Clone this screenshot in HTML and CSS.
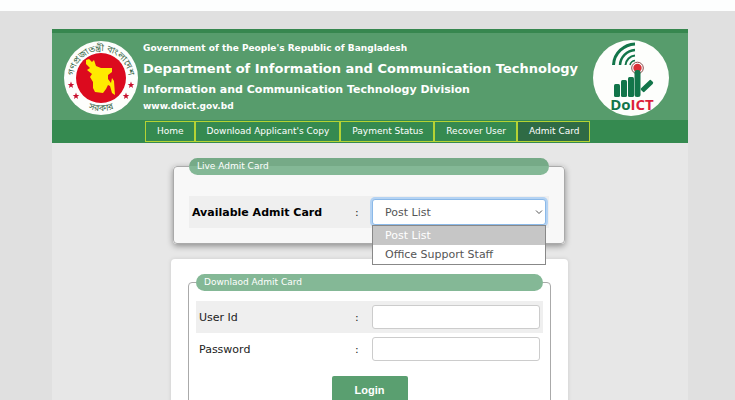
FILE: index.html
```
<!DOCTYPE html>
<html lang="en">

    <head>
        <meta charset="utf-8">
        <title>Admit Card</title>
        <link rel="stylesheet" href="styles.css">
    </head>

    <body>
        <div class="wrapper">

            <header class="header">
                <svg class="logo" viewBox="0 0 74 74" role="img" aria-label="Government seal">
                    <defs>
                        <path id="topArc" d="M10.500 45 A27.500 27.500 0 1 1 63.500 45"/>
                        <path id="bottomArc" d="M10 56 A33 33 0 0 0 64 56"/>
                        <path id="star" d="M0 -3.4 L0.9 -1.1 L3.3 -1 L1.4 0.6 L2 2.9 L0 1.6 L-2 2.9 L-1.4 0.6 L-3.3 -1 L-0.9 -1.1 Z"/>
                    </defs>
                    <circle cx="37" cy="37" r="37" fill="#fdfefc"/>
                    <circle cx="37" cy="37" r="25" fill="#dc0a1e"/>
                    <path d="M22 19 L25 18 L28 21 L30 19 L32 25 L37 27 L48 27 L48 31 L44 34 L44 38 L47 42 L48 37 L50 40 L51 54 L48 52 L46 45 L44 44 L42 48 L39 52 L31 51 L29 47 L29 41 L26 36 L28 33 L23 29 L26 27 L22 23 Z" fill="#ffea00"/>
                    <g fill="#c8102e">
                        <use href="#star" x="7" y="44"/>
                        <use href="#star" x="12" y="55"/>
                        <use href="#star" x="67" y="44"/>
                        <use href="#star" x="62" y="55"/>
                    </g>
                    <text class="seal-text"><textPath href="#topArc" startOffset="50%">গণপ্রজাতন্ত্রী বাংলাদেশ</textPath></text>
                    <text class="seal-text"><textPath href="#bottomArc" startOffset="50%">সরকার</textPath></text>
                </svg>

                <div class="titles">
                    <p class="small-title">Government of the People's Republic of Bangladesh</p>
                    <h1>Department of Information and Communication Technology</h1>
                    <h2>Information and Communication Technology Division</h2>
                    <p class="site">www.doict.gov.bd</p>
                </div>

                <svg class="logo logo-right" viewBox="0 0 76 76" role="img" aria-label="DoICT">
                    <circle cx="38" cy="38" r="38" fill="#fdfefc"/>
                    <g fill="none" stroke="#12754a">
                        <path d="M20.500 25 C21 13 31 4.500 42 4" stroke-width="3"/>
                        <path d="M27 25 C27.500 17 34 10.500 42 10" stroke-width="2.500"/>
                        <path d="M32.500 25 C33 20 37 16 42 15.500" stroke-width="2"/>
                        <path d="M37 25 C37.500 22.500 39 21 42 20.500" stroke-width="1.500"/>
                    </g>
                    <circle cx="44.500" cy="28" r="5.800" fill="#fff" stroke="#8b4d4d" stroke-width="1"/>
                    <circle cx="44.500" cy="28" r="4.200" fill="#db2f36"/>
                    <g fill="#12754a">
                        <rect x="21" y="44" width="6" height="13" rx="1.500"/>
                        <rect x="28" y="40" width="6" height="17" rx="1.500"/>
                        <rect x="35" y="37" width="6" height="20" rx="1.500"/>
                        <rect x="41.500" y="30" width="6" height="27" rx="2.500"/>
                        <rect x="47" y="43.500" width="14" height="5" rx="1.500" transform="rotate(-44 54 46)"/>
                    </g>
                    <text class="brand" x="39" y="70" text-anchor="middle" fill="#12754a">Do<tspan fill="#db1f3a">ICT</tspan></text>
                </svg>
            </header>

            <!-- Menu -->
            <nav class="menu">
                <a href="#">Home</a>
                <a href="#">Download Applicant's Copy</a>
                <a href="#">Payment Status</a>
                <a href="#">Recover User</a>
                <a class="active" href="#">Admit Card</a>
            </nav>

            <main class="content">
                <fieldset class="live">
                    <legend>Live Admit Card</legend>
                    <div class="row row-live">
                        <label for="post_list">Available Admit Card</label>
                        <span class="colon">:</span>
                        <div class="select-box">
                            <select id="post_list">
                                <option>Post List</option>
                                <option>Office Support Staff</option>
                            </select>
                            <svg class="arrow" viewBox="0 0 8 6" aria-hidden="true"><path d="M1 1.500 L4 4.500 L7 1.500" fill="none" stroke="#555" stroke-width="1"/></svg>
                            <ul class="options">
                                <li class="selected">Post List</li>
                                <li>Office Support Staff</li>
                            </ul>
                        </div>
                    </div>
                </fieldset>

                <form class="card">
                    <fieldset class="download">
                        <legend>Downlaod Admit Card</legend>
                        <div class="row shaded">
                            <label for="user_id">User Id</label>
                            <span class="colon">:</span>
                            <input type="text" id="user_id">
                        </div>
                        <div class="row">
                            <label for="password">Password</label>
                            <span class="colon">:</span>
                            <input type="password" id="password">
                        </div>
                        <button type="button" class="login">Login</button>
                    </fieldset>
                </form>
            </main>

        </div>
    </body>

</html>
```
FILE: styles.css
```
* {
    box-sizing: border-box;
}
html {
    min-height: 100%;
    background-color: #e0e0e0;
    scrollbar-width: none;
}
body {
    margin: 0;
    padding: 18px 47px 0 52px;
    border-top: 11px solid #fdfefe;
    font-family: Verdana, "DejaVu Sans", sans-serif;
    font-size: 11px;
    color: #222;
}
.wrapper {
    padding-bottom: 20px;
    background-color: #e7e7e7;
}
.header {
    display: flex;
    align-items: flex-start;
    padding: 7px 19px 4px 12px;
    border-top: 4px solid #37874f;
    background-color: #579c6c;
    color: white;
}
.logo {
    flex: none;
    width: 74px;
    height: 76px;
}
.logo-right {
    width: 76px;
}
.seal-text {
    font-family: "Noto Sans Bengali", "Noto Sans", sans-serif;
    font-size: 9px;
    fill: #3f6b4e;
    text-anchor: middle;
}
.brand {
    font-family: "Open Sans", sans-serif;
    font-size: 15px;
    font-weight: bold;
}
.titles {
    flex: 1;
    padding-left: 5px;
    font-weight: bold;
    white-space: nowrap;
}
.titles p, .titles h1, .titles h2 {
    margin: 0;
}
.titles .small-title {
    font-size: 9px;
    line-height: 16px;
}
.titles h1 {
    font-size: 13px;
    line-height: 26px;
}
.titles h2 {
    font-size: 11px;
    line-height: 16px;
}
.titles .site {
    font-size: 9px;
    line-height: 16px;
}
.menu {
    display: flex;
    padding: 1px 0 1px 93px;
    background-color: #358a50;
}
.menu a {
    padding: 0 10px 0 11px;
    border: 1px solid #b5d334;
    color: white;
    font-size: 9px;
    line-height: 19px;
    text-decoration: none;
    white-space: nowrap;
}
.menu .active {
    background-color: #2f6b45;
}
.content {
    padding: 15px 120px 0 119px;
}
fieldset {
    margin: 0;
    min-width: 0;
    border: 1px solid #aaa;
    border-radius: 4px;
}
legend {
    width: 100%;
    padding: 0 8px;
    border-radius: 9px;
    background-color: #84b896;
    color: white;
    font-size: 9px;
    line-height: 17px;
}
.live {
    margin: 0 3px 0 2px;
    padding: 21px 15px 15px;
    background-color: #f8f8f8;
    box-shadow: 0 2px 6px rgba(0, 0, 0, 0.4);
}
.live legend {
    background-image: linear-gradient(#76aa87 50%, #84b896 50%);
}
.row {
    display: flex;
    align-items: center;
    height: 32px;
    padding: 0 3px;
}
.row label {
    flex: 1;
}
.row-live, .shaded {
    background-color: #efefef;
}
.row-live label {
    color: #000;
    font-weight: bold;
}
.colon {
    width: 17px;
}
.select-box {
    position: relative;
    width: 174px;
}
select {
    display: block;
    width: 100%;
    height: 26px;
    padding: 0 12px;
    border: 1px solid #8bb9e8;
    border-radius: 3px;
    background-color: white;
    box-shadow: 0 0 0 2px #b5d3f3;
    color: #555;
    font: inherit;
    appearance: none;
}
.arrow {
    position: absolute;
    top: 10px;
    right: 3px;
    width: 8px;
    height: 6px;
}
.options {
    position: absolute;
    top: 100%;
    left: 0;
    z-index: 1;
    width: 100%;
    margin: 0;
    padding: 0;
    border: 1px solid #888;
    background-color: white;
    color: #555;
    list-style: none;
    line-height: 19px;
}
.options li {
    padding: 0 12px;
}
.options .selected {
    background-color: #c6c6c6;
    color: white;
}
.card {
    margin-top: 15px;
    padding: 15px 17px;
    border-radius: 4px;
    background-color: white;
    box-shadow: 0 0 4px rgba(0, 0, 0, 0.12);
}
.download {
    padding: 10px 7px 20px;
}
.row input {
    width: 168px;
    height: 24px;
    padding: 0 8px;
    border: 1px solid #ccc;
    border-radius: 3px;
    background-color: white;
    font: inherit;
}
.login {
    display: block;
    width: 76px;
    height: 27px;
    margin: 11px auto 0;
    border: none;
    border-radius: 2px;
    background-color: #5a9f70;
    color: white;
    font-family: Arial, "Liberation Sans", sans-serif;
    font-size: 11px;
    font-weight: bold;
}
```
